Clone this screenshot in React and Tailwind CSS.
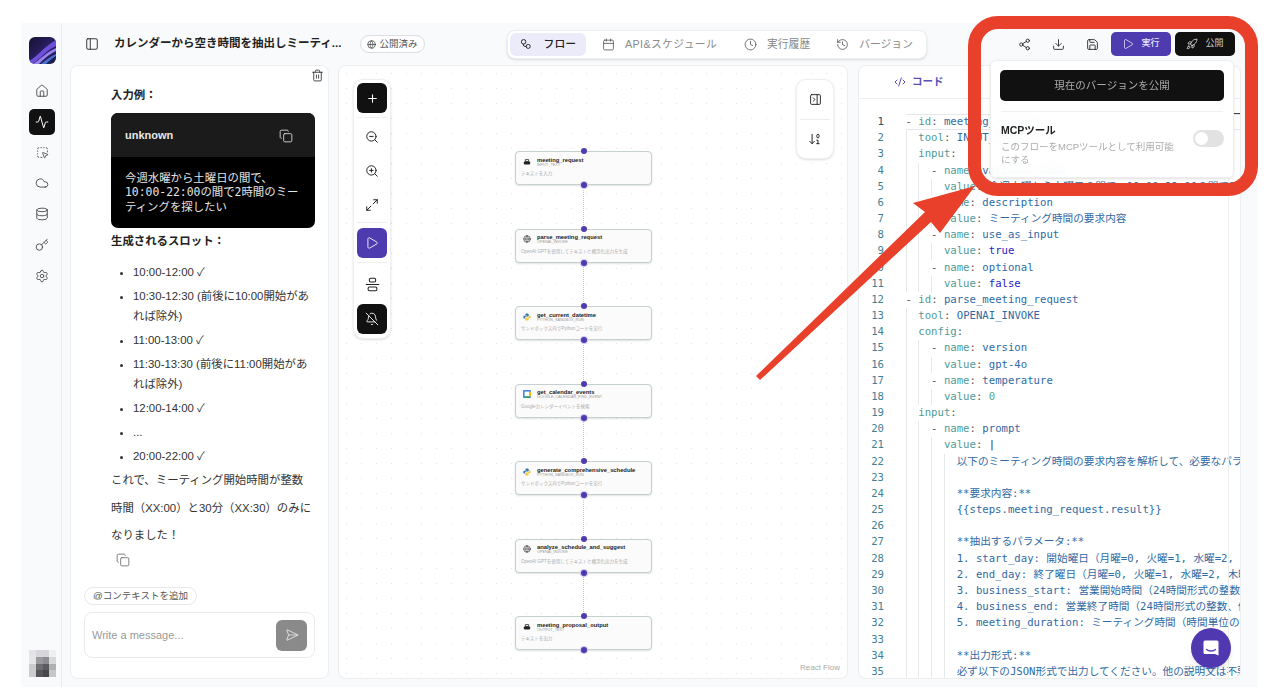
import {
  ArrowDown01, AlignVerticalJustifyCenter, Activity, BellOff, Calendar, Clock, CodeXml, Copy, Cloud,
  Database, Download, Globe, History, Home, Key, Maximize2, PanelLeft, PanelRightClose, Play, Plus, Rocket,
  Save, SendHorizontal, Settings, Share2, SquareDashedMousePointer, Trash2, ZoomIn, ZoomOut,
} from "lucide-react";

const SANS = "font-['Liberation_Sans','Noto_Sans_CJK_JP',sans-serif]";

const NODES = [
  { name: "meeting_request", tool: "INPUT_TEXT", desc: "テキストを入力", icon: "input" },
  { name: "parse_meeting_request", tool: "OPENAI_INVOKE", desc: "OpenAI GPTを使用してテキストと構造化出力を生成", icon: "openai" },
  { name: "get_current_datetime", tool: "PYTHON_SANDBOX_RUN", desc: "サンドボックス内でPythonコードを実行", icon: "python" },
  { name: "get_calendar_events", tool: "GOOGLE_CALENDAR_FIND_EVENT", desc: "Googleカレンダーイベントを検索", icon: "gcal" },
  { name: "generate_comprehensive_schedule", tool: "PYTHON_SANDBOX_RUN", desc: "サンドボックス内でPythonコードを実行", icon: "python" },
  { name: "analyze_schedule_and_suggest", tool: "OPENAI_INVOKE", desc: "OpenAI GPTを使用してテキストと構造化出力を生成", icon: "openai" },
  { name: "meeting_proposal_output", tool: "OUTPUT_TEXT", desc: "テキストを出力", icon: "input" },
];

// [depth, key, value, kind]
const CODE = [
  [0, "- id", "meeting_request", "str"],
  [1, "tool", "INPUT_TEXT", "str"],
  [1, "input", "", "str"],
  [2, "- name", "variable_name", "str"],
  [3, "value", "今週水曜から土曜日の間で、10:00-22:00の間で2時間のミーティングを探したい", "str"],
  [2, "- name", "description", "str"],
  [3, "value", "ミーティング時間の要求内容", "str"],
  [2, "- name", "use_as_input", "str"],
  [3, "value", "true", "bool"],
  [2, "- name", "optional", "str"],
  [3, "value", "false", "bool"],
  [0, "- id", "parse_meeting_request", "str"],
  [1, "tool", "OPENAI_INVOKE", "str"],
  [1, "config", "", "str"],
  [2, "- name", "version", "str"],
  [3, "value", "gpt-4o", "str"],
  [2, "- name", "temperature", "str"],
  [3, "value", "0", "num"],
  [1, "input", "", "str"],
  [2, "- name", "prompt", "str"],
  [3, "value", "|", "pipe"],
  [4, null, "以下のミーティング時間の要求内容を解析して、必要なパラメータを抽出してください。"],
  [4, null, ""],
  [4, null, "**要求内容:**"],
  [4, null, "{{steps.meeting_request.result}}"],
  [4, null, ""],
  [4, null, "**抽出するパラメータ:**"],
  [4, null, "1. start_day: 開始曜日（月曜=0, 火曜=1, 水曜=2, 木曜=3, 金曜=4）"],
  [4, null, "2. end_day: 終了曜日（月曜=0, 火曜=1, 水曜=2, 木曜=3, 金曜=4）"],
  [4, null, "3. business_start: 営業開始時間（24時間形式の整数、例: 9）"],
  [4, null, "4. business_end: 営業終了時間（24時間形式の整数、例: 18）"],
  [4, null, "5. meeting_duration: ミーティング時間（時間単位の数値）"],
  [4, null, ""],
  [4, null, "**出力形式:**"],
  [4, null, "必ず以下のJSON形式で出力してください。他の説明文は不要です。"],
];

function Logo() {
  return (
    <svg viewBox="0 0 27 27" className="w-[27px] h-[27px] rounded-[6px]">
      <defs>
        <linearGradient id="logo-bg" x1="0" y1="0" x2="1" y2="1">
          <stop offset="0" stopColor="#17122f" />
          <stop offset="0.55" stopColor="#2a1f66" />
          <stop offset="1" stopColor="#15204a" />
        </linearGradient>
      </defs>
      <rect width="27" height="27" fill="url(#logo-bg)" />
      <path d="M0 24C8 20 12 12 27 3V9C16 14 12 22 3 27H0Z" fill="#6d4fd8" />
      <path d="M4 27C12 22 17 15 27 11V14C19 18 14 23 10 27Z" fill="#9a80ee" />
      <path d="M12 27C17 23 22 19 27 17V19C23 21 20 24 17 27Z" fill="#4b6fd0" />
    </svg>
  );
}

function Avatar() {
  const rows = [
    ["#e4e4e4", "#d8d8dc", "#d6d6da", "#f0f0f0"],
    ["#e6e6e6", "#9a9a9e", "#8c8c90", "#d8d8d8"],
    ["#cbcbcb", "#6e6e72", "#5c5c60", "#b0b0b0"],
    ["#cccccc", "#56565a", "#48484c", "#c6c6c6"],
  ];
  return (
    <svg viewBox="0 0 4 4" className="w-[27px] h-[27px]" shapeRendering="crispEdges">
      {rows.map((r, y) => r.map((c, x) => <rect key={x + "-" + y} x={x} y={y} width="1" height="1" fill={c} />))}
    </svg>
  );
}

function FlowIcon() {
  return (
    <svg viewBox="0 0 24 24" className="w-[14px] h-[14px] text-[#222]" fill="none" stroke="currentColor" strokeWidth="2">
      <rect x="3" y="3" width="9" height="9" rx="4" />
      <rect x="13" y="13" width="8" height="8" rx="3.500" />
      <path d="M7 12v2a3 3 0 0 0 3 3h3" />
    </svg>
  );
}

function NodeIcon({ type }) {
  if (type === "python") {
    return (
      <svg viewBox="0 0 10 10" className="w-[8px] h-[8px]">
        <path d="M5 .5C3.2.5 3 1.3 3 2v1h2.2v.4H1.8C.9 3.4.4 4 .4 5.2c0 1.2.5 1.8 1.3 1.8h.9V5.8c0-.8.7-1.4 1.5-1.4h2c.7 0 1.100-.5 1.100-1.100V2C7.200 1 6.400.5 5 .5Z" fill="#3776ab" />
        <path d="M5 9.500c1.800 0 2-.8 2-1.500V7H4.800v-.4h3.400c.9 0 1.400-.6 1.400-1.800 0-1.200-.5-1.800-1.300-1.800h-.9v1.200c0 .8-.7 1.400-1.500 1.400h-2c-.7 0-1.100.5-1.100 1.100V8c0 1 .8 1.500 2.200 1.500Z" fill="#f5c93c" />
      </svg>
    );
  }
  if (type === "gcal") {
    return (
      <svg viewBox="0 0 10 10" className="w-[8px] h-[8px]">
        <rect width="10" height="10" rx="1" fill="#4285f4" />
        <rect x="2" y="2" width="6" height="6" fill="#fff" />
        <rect x="8" y="2" width="2" height="6" fill="#fbbc04" />
        <rect x="2" y="8" width="6" height="2" fill="#34a853" />
      </svg>
    );
  }
  if (type === "openai") {
    return <Globe className="w-[8px] h-[8px] text-[#555]" strokeWidth={2.4} />;
  }
  return (
    <svg viewBox="0 0 10 10" className="w-[8px] h-[8px]">
      <path d="M3 2h4v2.500H3z" fill="none" stroke="#222" strokeWidth="1" />
      <rect x="1" y="4.500" width="8" height="3.500" rx="1" fill="#222" />
    </svg>
  );
}

function FlowNode({ node, last }) {
  return (
    <div className="flex flex-col items-center">
      <div className="relative w-[137px] h-[34px] rounded-[4px] border border-[#c6d0ce] bg-[#fbfbfb] shadow-[0_1px_2px_rgba(0,0,0,0.12)] px-[5px] pt-[4px]">
        <span className="absolute left-1/2 -translate-x-1/2 -top-[4px] w-[6px] h-[6px] rounded-full bg-[#4f3bb0]" />
        <div className="flex items-center gap-[5px]">
          <span className="w-[11px] h-[11px] flex items-center justify-center">
            <NodeIcon type={node.icon} />
          </span>
          <div className="flex flex-col">
            <span className="text-[5.800px] leading-[6px] font-bold text-[#222]">{node.name}</span>
            <span className="text-[3.800px] leading-[4px] text-[#999]">{node.tool}</span>
          </div>
        </div>
        <div className="mt-[4px] text-[4.500px] leading-[6px] text-[#aaa] whitespace-nowrap">{node.desc}</div>
        <span className="absolute left-1/2 -translate-x-1/2 -bottom-[4px] w-[6px] h-[6px] rounded-full bg-[#4f3bb0] ring-1 ring-[#cfc9ee]" />
      </div>
      {!last && <div className="h-[43.500px] border-l border-dotted border-[#c4c4cc]" />}
    </div>
  );
}

function ToolButton({ children, tone }) {
  const bg = tone === "black" ? "bg-[#111] text-white" : tone === "purple" ? "bg-[#4f3bb0] text-white" : "text-[#222]";
  return <div className={"w-[30px] h-[30px] rounded-[6px] flex items-center justify-center " + bg}>{children}</div>;
}

function Slots() {
  const items = [
    "10:00-12:00 ✓",
    "10:30-12:30 (前後に10:00開始があれば除外)",
    "11:00-13:00 ✓",
    "11:30-13:30 (前後に11:00開始があれば除外)",
    "12:00-14:00 ✓",
    "...",
    "20:00-22:00 ✓",
  ];
  return (
    <ul className="list-disc pl-[22px] mt-[12px] flex flex-col gap-[4px] text-[#333] leading-[20px]">
      {items.map((t) => <li key={t}>{t}</li>)}
    </ul>
  );
}

function ChatPanel() {
  return (
    <div className="relative w-[259px] flex flex-col bg-white border border-[#eceef0] rounded-[8px] overflow-hidden">
      <Trash2 className="absolute right-[4px] top-[3px] w-[13px] h-[13px] text-[#333]" strokeWidth={1.6} />
      <div className="flex-1 overflow-hidden pl-[40px] pr-[13px] pt-[20px] text-[11.400px]">
        <div className="font-bold text-[#222] leading-[18px]">入力例：</div>
        <div className="mt-[9px] h-[115px] rounded-[7px] bg-black overflow-hidden">
          <div className="h-[44px] bg-[#1b1b1b] flex items-center justify-between pl-[14px] pr-[22px] pt-[1px]">
            <span className="font-bold text-[#e8e8e8] text-[11px]">unknown</span>
            <Copy className="w-[14px] h-[14px] text-[#ddd]" strokeWidth={1.5} />
          </div>
          <div className="pl-[14px] pr-[10px] pt-[14px] text-[#e4e4e4] leading-[14.300px] font-['DejaVu_Sans_Mono','Noto_Sans_CJK_JP',monospace]">
            今週水曜から土曜日の間で、10:00-22:00の間で2時間のミーティングを探したい
          </div>
        </div>
        <div className="mt-[4px] font-bold text-[#222] leading-[18px]">生成されるスロット：</div>
        <Slots />
        <p className="mt-[1px] text-[#333] leading-[27.500px] whitespace-nowrap">
          これで、ミーティング開始時間が整数<br />時間（XX:00）と30分（XX:30）のみに<br />なりました！
        </p>
        <Copy className="mt-[3px] ml-[5px] w-[14px] h-[14px] text-[#666]" strokeWidth={1.4} />
      </div>
      <div className="px-[13px] pb-[20px]">
        <div className="w-[113px] h-[18px] rounded-full border border-[#e6e7ea] flex items-center justify-center text-[9.500px] text-[#555]">
          @コンテキストを追加
        </div>
        <div className="mt-[7px] h-[46px] rounded-[8px] border border-[#e9eaec] flex items-center justify-between pl-[7px] pr-[7px]">
          <span className="text-[11px] text-[#9a9a9a] pt-[1px]">Write a message...</span>
          <div className="w-[31px] h-[31px] rounded-[6px] bg-[#8a8a8a] flex items-center justify-center">
            <SendHorizontal className="w-[14px] h-[14px] text-[#e6e6e6]" strokeWidth={1.5} />
          </div>
        </div>
      </div>
    </div>
  );
}

function CanvasPanel() {
  return (
    <div className="relative w-[510px] bg-white border border-[#eceef0] rounded-[8px] overflow-hidden bg-[radial-gradient(#dfe2e6_0.8px,transparent_0.8px)] bg-[size:15px_15px]">
      <div className="absolute left-[14px] top-[13px] w-[38px] h-[260px] rounded-[10px] bg-white border border-[#eeeff1] shadow-sm flex flex-col items-center pt-[3px]">
        <ToolButton tone="black"><Plus className="w-[13px] h-[13px]" strokeWidth={2} /></ToolButton>
        <div className="w-[30px] h-px bg-[#eeeeee] mt-[4px]" />
        <div className="mt-[4px] flex flex-col items-center gap-[4px]">
          <ToolButton><ZoomOut className="w-[14px] h-[14px]" strokeWidth={1.7} /></ToolButton>
          <ToolButton><ZoomIn className="w-[14px] h-[14px]" strokeWidth={1.7} /></ToolButton>
          <ToolButton><Maximize2 className="w-[14px] h-[14px]" strokeWidth={1.7} /></ToolButton>
        </div>
        <div className="w-[30px] h-px bg-[#eeeeee] mt-[2px]" />
        <div className="mt-[5px]"><ToolButton tone="purple"><Play className="w-[14px] h-[14px]" strokeWidth={1.5} /></ToolButton></div>
        <div className="w-[30px] h-px bg-[#eeeeee] mt-[4px]" />
        <div className="mt-[6px]"><ToolButton><AlignVerticalJustifyCenter className="w-[15px] h-[15px]" strokeWidth={1.7} /></ToolButton></div>
        <div className="mt-[5px]"><ToolButton tone="black"><BellOff className="w-[14px] h-[14px]" strokeWidth={1.5} /></ToolButton></div>
      </div>

      <div className="absolute right-[13px] top-[13px] w-[38px] h-[80px] rounded-[10px] bg-white border border-[#eeeff1] shadow-sm flex flex-col items-center">
        <div className="h-[40px] flex items-center"><PanelRightClose className="w-[13px] h-[13px] text-[#222]" strokeWidth={1.7} /></div>
        <div className="w-[30px] h-px bg-[#eeeeee]" />
        <div className="h-[39px] flex items-center"><ArrowDown01 className="w-[14px] h-[14px] text-[#222]" strokeWidth={1.7} /></div>
      </div>

      <div className="pt-[85px] pl-[176px] flex flex-col items-start">
        {NODES.map((n, i) => <FlowNode key={n.name + i} node={n} last={i === NODES.length - 1} />)}
      </div>
      <span className="absolute right-[7px] bottom-[4px] text-[8px] text-[#aaa]">React Flow</span>
    </div>
  );
}

function CodeLine({ line, active }) {
  const [depth, key, value, kind] = line;
  const valueColor = kind === "bool" ? "text-[#2a22c8]" : kind === "num" ? "text-[#5aa58a]" : kind === "pipe" ? "text-[#333]" : "text-[#2f6aa5]";
  return (
    <div className={"h-[16.180px] flex whitespace-nowrap leading-[16.180px] " + (active ? "shadow-[inset_0_1px_0_#e5e7eb,inset_0_-1px_0_#e5e7eb]" : "")}>
      {Array.from({ length: depth }).map((_, i) => (
        <span key={i} className="w-[12.800px] shrink-0 border-l border-[#e6e8ea]" />
      ))}
      {key ? (
        <span>
          {key.startsWith("- ") && <span className="text-[#555]">- </span>}
          <span className="text-[#4f9a97]">{key.replace("- ", "")}</span>
          <span className="text-[#555]">:</span>
          {value && " "}
          <span className={valueColor}>{value}</span>
        </span>
      ) : (
        <span className="text-[#2f6aa5]">{value}</span>
      )}
    </div>
  );
}

function CodePanel() {
  return (
    <div className="relative w-[383px] flex flex-col bg-white border border-[#eceef0] rounded-[8px] overflow-hidden">
      <div className="h-[33px] shrink-0 border-b border-[#eceef0] flex items-center pl-[35px] gap-[6px] text-[10.500px] font-bold text-[#5b4fb5]">
        <CodeXml className="w-[12px] h-[12px]" strokeWidth={2} />
        <span>コード</span>
      </div>
      <div className="flex-1 flex overflow-hidden pt-[15px] text-[10.650px] font-['DejaVu_Sans_Mono','Noto_Sans_CJK_JP',monospace]">
        <div className="w-[25px] shrink-0 text-right text-[#3f7f95]">
          {CODE.map((_, i) => (
            <div key={i} className={"h-[16.180px] leading-[16.180px] " + (i === 0 ? "text-[#24506a]" : "")}>{i + 1}</div>
          ))}
        </div>
        <div className="ml-[21.500px] flex-1 min-w-0 overflow-hidden">
          {CODE.map((line, i) => <CodeLine key={i} line={line} active={i === 0} />)}
        </div>
      </div>
      <div className="absolute right-[11px] top-[33px] bottom-0 w-px bg-[#eceef0]" />
      <div className="absolute right-0 top-[47px] w-[6px] h-px bg-[#444]" />
    </div>
  );
}

function Tab({ icon, label, active, wide }) {
  const state = active
    ? "bg-[#ecebfa] text-[#222] w-[76px] font-medium gap-[12px]"
    : wide
      ? "text-[#8a8a8a] gap-[10px] w-[136px] tracking-[0.350px]"
      : "text-[#8a8a8a] gap-[10px]";
  return (
    <div className={"h-[23px] flex items-center rounded-[6px] px-[10px] text-[10.800px] " + state}>
      {icon}
      <span className="whitespace-nowrap">{label}</span>
    </div>
  );
}

function Header() {
  const tabIcon = "w-[13px] h-[13px] text-[#555]";
  return (
    <div className="h-[42px] shrink-0 flex items-center pl-[23px] pr-[23px]">
      <PanelLeft className="w-[14px] h-[14px] text-[#222]" strokeWidth={1.5} />
      <div className="ml-[15px] w-[233px] text-[11.500px] font-bold text-[#222] whitespace-nowrap overflow-hidden">
        カレンダーから空き時間を抽出しミーティ...
      </div>
      <div className="ml-[13px] w-[65px] h-[18px] rounded-full border border-[#dcdde0] bg-white flex items-center justify-center gap-[3px] text-[9.500px] text-[#555]">
        <Globe className="w-[9px] h-[9px] text-[#444]" strokeWidth={2} />
        公開済み
      </div>
      <div className="ml-[82px] w-[420px] h-[29px] rounded-[8px] bg-white border border-[#eceef0] shadow-sm flex items-center gap-[6px] pl-[2px]">
        <Tab icon={<FlowIcon />} label="フロー" active />
        <Tab icon={<Calendar className={tabIcon} strokeWidth={1.5} />} label="API&スケジュール" wide />
        <Tab icon={<Clock className={tabIcon} strokeWidth={1.5} />} label="実行履歴" />
        <Tab icon={<History className={tabIcon} strokeWidth={1.5} />} label="バージョン" />
      </div>
      <div className="ml-auto flex items-center h-[24px]">
        <Share2 className="w-[13px] h-[13px] text-[#222]" strokeWidth={1.6} />
        <Download className="ml-[21px] w-[13px] h-[13px] text-[#222]" strokeWidth={1.6} />
        <Save className="ml-[21px] w-[13px] h-[13px] text-[#222]" strokeWidth={1.6} />
        <div className="ml-[12px] w-[60px] h-[24px] rounded-[5px] bg-[#4f3bb0] flex items-center justify-center gap-[7px] text-[9px] font-medium text-[#e8e6fa]">
          <Play className="w-[12px] h-[12px]" strokeWidth={1.5} />
          実行
        </div>
        <div className="ml-[4px] w-[60px] h-[24px] rounded-[5px] bg-[#111] flex items-center justify-center gap-[7px] text-[9px] text-[#ccc]">
          <Rocket className="w-[12px] h-[12px] text-[#eee]" strokeWidth={1.5} />
          公開
        </div>
      </div>
    </div>
  );
}

function PublishMenu() {
  return (
    <div className="absolute left-[990px] top-[60px] w-[244px] h-[118px] rounded-[6px] bg-white/90 backdrop-blur-sm border border-[#eceef0] shadow-sm px-[10px] pt-[9px]">
      <div className="h-[31px] -mx-px rounded-[5px] bg-[#111] flex items-center justify-center text-[10.500px] text-[#aaa]">
        現在のバージョンを公開
      </div>
      <div className="mt-[10px] h-px bg-[#f1f1f3]" />
      <div className="mt-[11px] flex justify-between">
        <div className="w-[176px]">
          <div className="text-[10.500px] font-bold text-[#222] leading-[14px]">MCPツール</div>
          <div className="mt-[3px] text-[9.500px] text-[#aaa] leading-[13px]">このフローをMCPツールとして利用可能にする</div>
        </div>
        <div className="mt-[7px] -mr-px w-[31px] h-[17px] rounded-full bg-[#e2e2e2] p-[2px]">
          <div className="w-[13px] h-[13px] rounded-full bg-white" />
        </div>
      </div>
    </div>
  );
}

export default function App() {
  const railIcon = "w-[14px] h-[14px]";
  const railItem = "w-[26px] h-[26px] flex items-center justify-center";
  return (
    <div className={"relative w-[1272px] h-[696px] bg-white pt-[23px] pl-[21px] pr-[14px] pb-[9px] overflow-hidden " + SANS}>
      <div className="w-full h-full bg-[#f9fafb] flex">
        <div className="w-[41px] shrink-0 border-r border-[#e9ebee] flex flex-col items-start pl-[8px] pt-[14px]">
          <Logo />
          <div className="mt-[14px] flex flex-col items-center gap-[4.800px] text-[#444]">
            <div className={railItem}><Home className={railIcon} strokeWidth={1.5} /></div>
            <div className={railItem + " rounded-[5px] bg-[#111]"}><Activity className={railIcon + " text-white"} strokeWidth={1.7} /></div>
            <div className={railItem}><SquareDashedMousePointer className="w-[13px] h-[13px]" strokeWidth={1.5} /></div>
            <div className={railItem}><Cloud className={railIcon} strokeWidth={1.5} /></div>
            <div className={railItem}><Database className={railIcon} strokeWidth={1.5} /></div>
            <div className={railItem}><Key className={railIcon} strokeWidth={1.5} /></div>
            <div className={railItem}><Settings className={railIcon} strokeWidth={1.5} /></div>
          </div>
          <div className="mt-auto mb-[10px]"><Avatar /></div>
        </div>
        <div className="flex-1 min-w-0 flex flex-col pb-[8px]">
          <Header />
          <div className="flex-1 min-h-0 flex pl-[8px] pr-[17px]">
            <ChatPanel />
            <div className="ml-[9px] flex">
              <CanvasPanel />
            </div>
            <div className="ml-[10px] flex">
              <CodePanel />
            </div>
          </div>
        </div>
      </div>

      <PublishMenu />

      {/* annotation drawn on top of the screenshot */}
      <div className="absolute left-[968px] top-[16px] w-[290px] h-[180px] rounded-[30px] border-[13px] border-[#e8402a] pointer-events-none" />
      <svg className="absolute left-0 top-0 w-[1272px] h-[696px] pointer-events-none" viewBox="0 0 1272 696">
        <polygon points="756,376 925,212 913,203 975,186 940,233 931,222 760,380" fill="#e8402a" />
      </svg>

      <div className="absolute left-[1191px] top-[628px] w-[40px] h-[40px] rounded-full bg-[#5039b0] shadow-md flex items-center justify-center">
        <svg viewBox="0 0 20 20" className="w-[20px] h-[20px]" fill="none">
          <path d="M4 2.500h12a1.500 1.500 0 0 1 1.500 1.500v13.500l-3.500-1.500H4A1.500 1.500 0 0 1 2.500 14.500V4A1.500 1.500 0 0 1 4 2.500Z" fill="#fff" />
          <path d="M5.500 11.500c2.500 2 6.500 2 9 0" stroke="#5039b0" strokeWidth="1.300" strokeLinecap="round" />
        </svg>
      </div>
    </div>
  );
}
